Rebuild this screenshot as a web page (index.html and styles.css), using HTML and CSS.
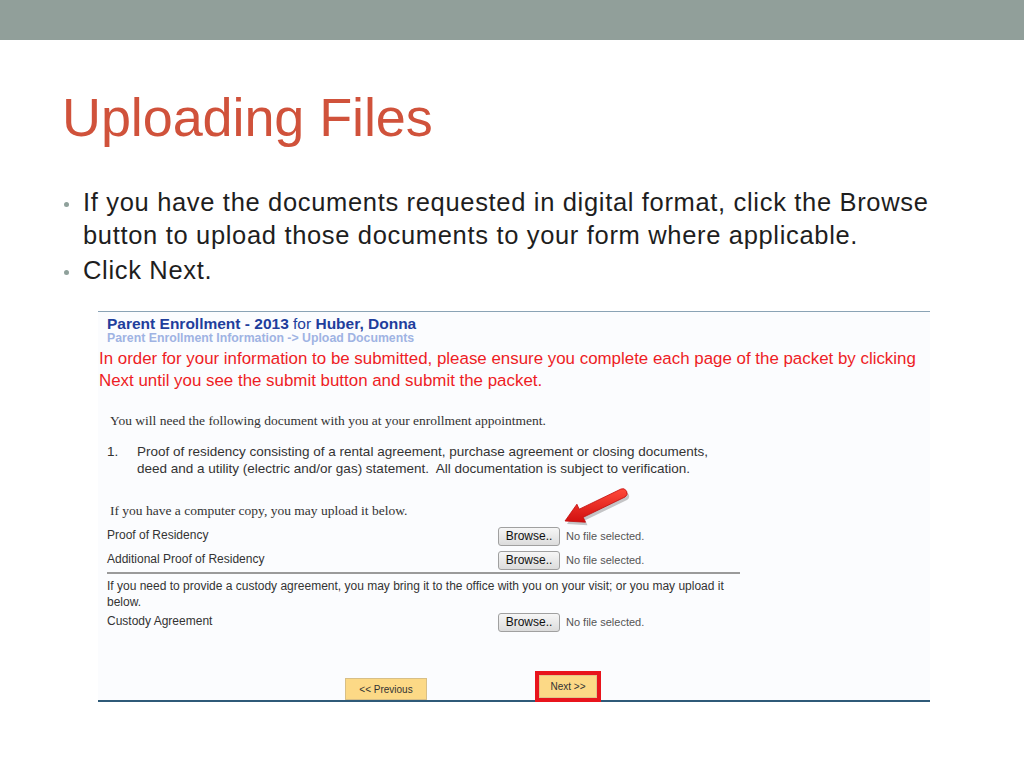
FILE: index.html
```html
<!DOCTYPE html>
<html>
<head>
<meta charset="utf-8">
<link rel="stylesheet" href="styles.css">
</head>
<body>
<div class="topbar"></div>
<h1 class="title">Uploading Files</h1>
<ul class="bullets">
  <li>If you have the documents requested in digital format, click the Browse button to upload those documents to your form where applicable.</li>
  <li>Click Next.</li>
</ul>
<div class="panel">
  <div class="heading">Parent Enrollment - 2013 <span class="for">for</span> Huber, Donna</div>
  <div class="crumb">Parent Enrollment Information -&gt; Upload Documents</div>
  <div class="warning">In order for your information to be submitted, please ensure you complete each page of the packet by clicking Next until you see the submit button and submit the packet.</div>
  <div class="serif need">You will need the following document with you at your enrollment appointment.</div>
  <div class="docitem"><span class="num">1.</span><span class="doctext">Proof of residency consisting of a rental agreement, purchase agreement or closing documents, deed and a utility (electric and/or gas) statement.&nbsp; All documentation is subject to verification.</span></div>
  <div class="serif copy">If you have a computer copy, you may upload it below.</div>
  <div class="uploads">
    <div class="row"><span class="label">Proof of Residency</span><span class="file"><span class="browse">Browse..</span><span class="nofile">No file selected.</span></span></div>
    <div class="row"><span class="label">Additional Proof of Residency</span><span class="file"><span class="browse">Browse..</span><span class="nofile">No file selected.</span></span></div>
  </div>
  <div class="custody-note">If you need to provide a custody agreement, you may bring it to the office with you on your visit; or you may upload it below.</div>
  <div class="row custody"><span class="label">Custody Agreement</span><span class="file"><span class="browse">Browse..</span><span class="nofile">No file selected.</span></span></div>
  <div class="nav">
    <span class="navbtn prev">&lt;&lt; Previous</span>
    <span class="nextwrap"><span class="navbtn next">Next &gt;&gt;</span></span>
  </div>
  <svg class="arrow" width="84" height="54" viewBox="0 0 84 54">
    <defs>
      <linearGradient id="ag" x1="0" y1="0" x2="0" y2="1">
        <stop offset="0" stop-color="#ff4a3a"/>
        <stop offset="1" stop-color="#d10f0f"/>
      </linearGradient>
    </defs>
    <path transform="translate(2,3)" opacity="0.22" fill="#000" d="M10 40 L21.9 23.2 L24.2 28.2 L66 8 A4.5 4.5 0 0 1 70 16 L28.2 36.3 L30.5 41.2 Z"/>
    <path fill="url(#ag)" stroke="#c20c0c" stroke-width="0.8" stroke-linejoin="round" d="M10 40 L21.9 23.2 L24.2 28.2 L66 8 A4.5 4.5 0 0 1 70 16 L28.2 36.3 L30.5 41.2 Z"/>
  </svg>
</div>
</body>
</html>
```

FILE: styles.css
```css
html, body {
  margin: 0;
  padding: 0;
  background: #ffffff;
}
body {
  width: 1024px;
  height: 768px;
  overflow: hidden;
  font-family: "Liberation Sans", Arial, sans-serif;
}
.topbar {
  height: 40px;
  background: #919f9a;
}
.title {
  margin: 45px 0 0 62px;
  font-weight: normal;
  font-size: 54px;
  line-height: 64px;
  color: #d0523b;
  letter-spacing: -0.1px;
}
.bullets {
  list-style: none;
  margin: 37px 0 0 0;
  padding: 0 0 0 83px;
  width: 880px;
  font-size: 25.5px;
  letter-spacing: 0.67px;
  line-height: 33px;
  color: #1e1e1e;
}
.bullets li {
  position: relative;
}
.bullets li + li {
  margin-top: 2px;
}
.bullets li::before {
  content: "";
  position: absolute;
  left: -19px;
  top: 16px;
  width: 5px;
  height: 5px;
  border-radius: 50%;
  background: #8fa19b;
}
.panel {
  position: relative;
  display: flex;
  flex-direction: column;
  margin: 24px 0 0 98px;
  width: 832px;
  height: 388px;
  border-top: 1px solid #8aa3b5;
  border-bottom: 2px solid #2f5a78;
  background: #fbfcfe;
}
.heading {
  margin: 3px 0 0 9px;
  font-size: 15.5px;
  line-height: 17px;
  font-weight: bold;
  color: #1f3e9c;
}
.heading .for {
  font-weight: normal;
}
.crumb {
  margin-left: 9px;
  font-size: 12.3px;
  line-height: 13px;
  font-weight: bold;
  color: #9fb3e3;
}
.warning {
  margin: 3px 0 0 1px;
  width: 830px;
  font-size: 16.9px;
  line-height: 22px;
  color: #ee1c25;
}
.serif {
  font-family: "Liberation Serif", "Times New Roman", serif;
  font-size: 13.5px;
  color: #333333;
  margin-left: 12px;
}
.need {
  margin-top: 21px;
  line-height: 16px;
}
.docitem {
  display: flex;
  margin: 14px 0 0 9px;
  font-size: 13.5px;
  line-height: 17px;
  color: #333333;
}
.num {
  width: 30px;
  flex: none;
}
.doctext {
  width: 580px;
}
.copy {
  margin-top: 26px;
  line-height: 16px;
}
.uploads {
  margin: 5px 0 0 9px;
  width: 633px;
  border-bottom: 2px solid #9a9a9a;
}
.row {
  display: flex;
  align-items: center;
  height: 24px;
  font-size: 12px;
  color: #333333;
}
.label {
  width: 391px;
  flex: none;
  position: relative;
  top: -1px;
}
.file {
  display: flex;
  align-items: center;
}
.browse {
  display: inline-block;
  width: 60px;
  height: 17px;
  line-height: 17px;
  text-align: center;
  border: 1px solid #a0a0a0;
  border-radius: 3px;
  background: linear-gradient(#f6f6f6, #dcdcdc);
  color: #111111;
  font-size: 12px;
}
.nofile {
  margin-left: 6px;
  font-size: 11px;
  color: #555555;
}
.custody-note {
  margin: 4px 0 0 9px;
  width: 630px;
  font-size: 12px;
  line-height: 16px;
  color: #333333;
}
.custody {
  margin: 0 0 0 9px;
}
.nav {
  display: flex;
  align-items: flex-end;
  margin-top: auto;
  padding-left: 247px;
}
.navbtn {
  display: inline-flex;
  align-items: center;
  justify-content: center;
  box-sizing: border-box;
  font-size: 10px;
  color: #333333;
  background: #fcd986;
  border: 1px solid #d8bf86;
}
.prev {
  width: 82px;
  height: 22px;
}
.nextwrap {
  display: flex;
  margin-left: 108px;
  margin-bottom: -2px;
  border: 4px solid #e8141c;
}
.next {
  width: 58px;
  height: 23px;
  border-color: #e0c58a;
}
.arrow {
  position: absolute;
  left: 457px;
  top: 169px;
}
```
